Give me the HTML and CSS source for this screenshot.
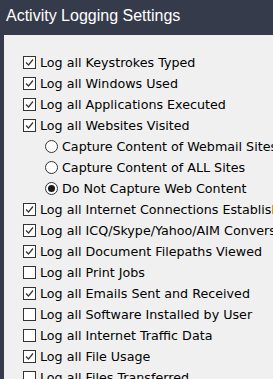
FILE: index.html
```html
<!DOCTYPE html>
<html lang="en">
<head>
    <meta charset="UTF-8">
    <title>Activity Logging Settings</title>
    <link rel="stylesheet" href="styles.css">
</head>
<body>
    <div class="window">
        <div class="title">Activity Logging Settings</div>
        <div class="panel">
            <div class="row"><span class="box on"><svg viewBox="0 0 11 11"><path d="M2 5.5 L4.5 8 L9 2.5"/></svg></span>Log all Keystrokes Typed</div>
            <div class="row"><span class="box on"><svg viewBox="0 0 11 11"><path d="M2 5.5 L4.5 8 L9 2.5"/></svg></span>Log all Windows Used</div>
            <div class="row"><span class="box on"><svg viewBox="0 0 11 11"><path d="M2 5.5 L4.5 8 L9 2.5"/></svg></span>Log all Applications Executed</div>
            <div class="row"><span class="box on"><svg viewBox="0 0 11 11"><path d="M2 5.5 L4.5 8 L9 2.5"/></svg></span>Log all Websites Visited</div>
            <div class="row sub"><span class="radio"></span>Capture Content of Webmail Sites</div>
            <div class="row sub"><span class="radio"></span>Capture Content of ALL Sites</div>
            <div class="row sub"><span class="radio on"></span>Do Not Capture Web Content</div>
            <div class="row"><span class="box on"><svg viewBox="0 0 11 11"><path d="M2 5.5 L4.5 8 L9 2.5"/></svg></span>Log all Internet Connections Established</div>
            <div class="row"><span class="box on"><svg viewBox="0 0 11 11"><path d="M2 5.5 L4.5 8 L9 2.5"/></svg></span>Log all ICQ/Skype/Yahoo/AIM Conversations</div>
            <div class="row"><span class="box on"><svg viewBox="0 0 11 11"><path d="M2 5.5 L4.5 8 L9 2.5"/></svg></span>Log all Document Filepaths Viewed</div>
            <div class="row"><span class="box"></span>Log all Print Jobs</div>
            <div class="row"><span class="box on"><svg viewBox="0 0 11 11"><path d="M2 5.5 L4.5 8 L9 2.5"/></svg></span>Log all Emails Sent and Received</div>
            <div class="row"><span class="box"></span>Log all Software Installed by User</div>
            <div class="row"><span class="box"></span>Log all Internet Traffic Data</div>
            <div class="row"><span class="box on"><svg viewBox="0 0 11 11"><path d="M2 5.5 L4.5 8 L9 2.5"/></svg></span>Log all File Usage</div>
            <div class="row"><span class="box"></span>Log all Files Transferred</div>
        </div>
    </div>
</body>
</html>
```

FILE: styles.css
```css
body {
    margin: 0;
    background-color: #363b4b;
    overflow: hidden;
}

.window {
    width: 273px;
    height: 379px;
}

.title {
    height: 35px;
    padding-left: 6px;
    line-height: 31px;
    font-family: 'Liberation Sans', Arial, sans-serif;
    font-size: 16px;
    color: #ffffff;
}

.panel {
    margin-left: 4px;
    height: 344px;
    background-color: #f0f0f0;
    padding-top: 17px;
    padding-left: 19px;
    display: flex;
    flex-direction: column;
    white-space: nowrap;
    overflow: hidden;
}

.row {
    height: 21px;
    flex-shrink: 0;
    display: flex;
    align-items: center;
    gap: 4px;
    font-family: 'DejaVu Sans', Verdana, sans-serif;
    font-size: 12.7px;
    color: #000000;
}

.row.sub {
    padding-left: 22px;
}

.box {
    width: 11px;
    height: 11px;
    border: 1px solid #333333;
    background-color: #ffffff;
    flex-shrink: 0;
}

.box svg {
    display: block;
    width: 11px;
    height: 11px;
    fill: none;
    stroke: #333333;
    stroke-width: 1.2;
}

.radio {
    width: 11px;
    height: 11px;
    border: 1px solid #333333;
    border-radius: 50%;
    background-color: #ffffff;
    flex-shrink: 0;
    display: flex;
    align-items: center;
    justify-content: center;
}

.radio.on::after {
    content: '';
    width: 7px;
    height: 7px;
    border-radius: 50%;
    background-color: #1a1a1a;
}
```
